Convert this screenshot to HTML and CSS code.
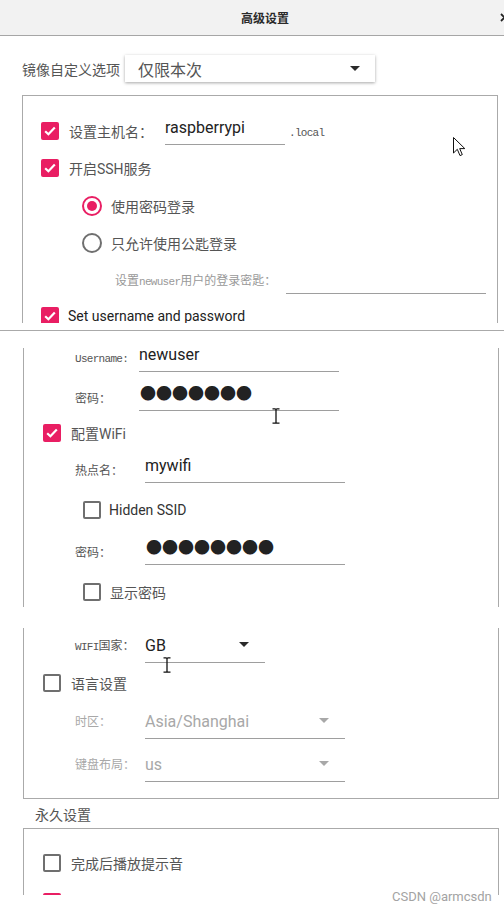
FILE: index.html
```html
<!DOCTYPE html>
<html lang="zh-CN">
<head>
<meta charset="utf-8">
<title>高级设置</title>
<link rel="stylesheet" href="styles.css">
</head>
<body>
<header class="titlebar">
  <span class="title">高级设置</span>
  <span class="close"><svg width="9" height="9" viewBox="0 0 9 9"><path d="M1 1 L8 8 M8 1 L1 8" stroke="#222" stroke-width="1.8"/></svg></span>
</header>

<div class="opt-row">
  <span class="opt-label">镜像自定义选项</span>
  <div class="select-box"><span>仅限本次</span><span class="caret"></span></div>
</div>

<section class="panel p1">
  <div class="row">
    <span class="cb on"><svg width="14" height="14" viewBox="0 0 14 14"><path d="M2.2 7.2 L5.4 10.2 L11.8 3.6" fill="none" stroke="#fff" stroke-width="2.2"/></svg></span>
    <span class="lbl w96">设置主机名：</span>
    <div class="field w120">raspberrypi</div>
    <span class="suffix mono">.local</span>
  </div>
  <div class="row h38">
    <span class="cb on"><svg width="14" height="14" viewBox="0 0 14 14"><path d="M2.2 7.2 L5.4 10.2 L11.8 3.6" fill="none" stroke="#fff" stroke-width="2.2"/></svg></span>
    <span class="lbl">开启SSH服务</span>
  </div>
  <div class="row sub">
    <span class="radio on"></span>
    <span class="rlbl">使用密码登录</span>
  </div>
  <div class="row sub">
    <span class="radio"></span>
    <span class="rlbl">只允许使用公匙登录</span>
  </div>
  <div class="row">
    <span class="keylbl">设置<span class="mono">newuser</span>用户的登录密匙：</span>
    <div class="field w200"></div>
  </div>
  <div class="row h36">
    <span class="cb on"><svg width="14" height="14" viewBox="0 0 14 14"><path d="M2.2 7.2 L5.4 10.2 L11.8 3.6" fill="none" stroke="#fff" stroke-width="2.2"/></svg></span>
    <span class="en">Set username and password</span>
  </div>
  <svg class="pointer" width="13" height="20" viewBox="0 0 13 20"><path d="M0.5 0.5 L0.5 16 L4.3 12.3 L7 18.6 L9.3 17.6 L6.7 11.6 L11.8 11.6 Z" fill="#fff" stroke="#111" stroke-width="1"/></svg>
</section>

<div class="seam"></div>

<section class="panel f2">
  <div class="row h20 ind">
    <span class="flabel w64"><span class="mono">Username:</span></span>
    <div class="field w200">newuser</div>
  </div>
  <div class="row h36 mt11 ind">
    <span class="flabel w64">密码：</span>
    <div class="field w200 dots">●●●●●●●</div>
  </div>
  <div class="row h36">
    <span class="cb on"><svg width="14" height="14" viewBox="0 0 14 14"><path d="M2.2 7.2 L5.4 10.2 L11.8 3.6" fill="none" stroke="#fff" stroke-width="2.2"/></svg></span>
    <span class="lbl">配置WiFi</span>
  </div>
  <div class="row h36 ind">
    <span class="flabel w70">热点名：</span>
    <div class="field w200">mywifi</div>
  </div>
  <div class="row h36 mt5 sub2">
    <span class="cb off"></span>
    <span class="en2">Hidden SSID</span>
  </div>
  <div class="row h36 mt5 ind">
    <span class="flabel w70">密码：</span>
    <div class="field w200 dots">●●●●●●●●</div>
  </div>
  <div class="row h36 mt5 sub2">
    <span class="cb off"></span>
    <span class="rlbl">显示密码</span>
  </div>
  <svg class="ibeam ib1" width="8" height="16" viewBox="0 0 8 16"><path d="M0.5 0.8 H3 Q4 0.8 4 2 V14 Q4 15.2 5 15.2 H7.5 M7.5 0.8 H5 Q4 0.8 4 2 M4 14 Q4 15.2 3 15.2 H0.5" fill="none" stroke="#111" stroke-width="1.3"/></svg>
</section>

<section class="panel f3">
  <div class="row h32 ind">
    <span class="flabel w70"><span class="mono">WIFI</span>国家：</span>
    <div class="field w120 low">GB<span class="caret in"></span></div>
  </div>
  <div class="row h36 mt5">
    <span class="cb off"></span>
    <span class="lbl">语言设置</span>
  </div>
  <div class="row h36 mt1 ind">
    <span class="flabel w70 dim">时区：</span>
    <div class="field w200 low dim">Asia/Shanghai<span class="caret in dim"></span></div>
  </div>
  <div class="row h36 mt7 ind">
    <span class="flabel w70 dim">键盘布局：</span>
    <div class="field w200 low dim">us<span class="caret in dim"></span></div>
  </div>
  <svg class="ibeam ib2" width="8" height="16" viewBox="0 0 8 16"><path d="M0.5 0.8 H3 Q4 0.8 4 2 V14 Q4 15.2 5 15.2 H7.5 M7.5 0.8 H5 Q4 0.8 4 2 M4 14 Q4 15.2 3 15.2 H0.5" fill="none" stroke="#111" stroke-width="1.3"/></svg>
</section>

<div class="section-title">永久设置</div>

<section class="panel p2">
  <div class="row h36">
    <span class="cb off"></span>
    <span class="lbl">完成后播放提示音</span>
  </div>
  <div class="row h36 mt3">
    <span class="cb on"><svg width="14" height="14" viewBox="0 0 14 14"><path d="M2.2 7.2 L5.4 10.2 L11.8 3.6" fill="none" stroke="#fff" stroke-width="2.2"/></svg></span>
  </div>
</section>

<div class="watermark">CSDN @armcsdn</div>
</body>
</html>
```

FILE: styles.css
```css
* { box-sizing: border-box; }
html, body { margin: 0; padding: 0; overflow: hidden; background: #fff; }
body {
  width: 504px;
  height: 911px;
  position: relative;
  font-family: Roboto, "Noto Sans CJK SC", sans-serif;
  font-size: 14px;
  color: #555;
}

/* title bar */
.titlebar {
  width: 504px;
  height: 36px;
  overflow: hidden;
  padding-left: 26px;
  background: #f2f2f2;
  border-bottom: 1px solid #a6a6a6;
  display: grid;
  grid-template-columns: 1fr auto 1fr;
  align-items: center;
}
.title { grid-column: 2; font-size: 12px; font-weight: 700; color: #2a2a2a; }
.close { grid-column: 3; justify-self: end; margin-right: -5px; display: flex; }

/* image options row */
.opt-row {
  display: flex;
  align-items: center;
  height: 27px;
  margin-top: 19px;
  padding-left: 22px;
}
.opt-label { font-size: 14px; color: #555; margin-right: 5px; }
.select-box {
  width: 250px;
  height: 27px;
  display: flex;
  align-items: center;
  justify-content: space-between;
  padding: 0 15px 0 13px;
  box-shadow: 0 1px 3px rgba(0, 0, 0, 0.35);
  font-size: 16px;
  color: #555;
}
.caret {
  width: 0;
  height: 0;
  border-left: 5px solid transparent;
  border-right: 5px solid transparent;
  border-top: 5px solid #2a2a2a;
}
.caret.in { margin-top: 7px; margin-right: 16px; }
.caret.dim { border-top-color: #a8a8a8; }

/* panels */
.panel { position: relative; border: 1px solid #aaa; }
.p1 {
  margin: 13px 6px 0 22px;
  border-bottom: none;
  height: 228px;
  overflow: hidden;
  padding: 16px 0 0 18px;
}
.seam { height: 1px; background: #aaa; margin-top: 7px; }
.f2 {
  margin: 17px 5px 0 23px;
  border-top: none;
  border-bottom: none;
  height: 259px;
  padding-left: 19px;
}
.f3 {
  margin: 21px 5px 0 23px;
  border-top: none;
  padding: 0 0 17px 19px;
}
.section-title {
  height: 29px;
  display: flex;
  align-items: center;
  padding-left: 35px;
  font-size: 14px;
  color: #555;
}
.p2 {
  margin: 0 5px 0 23px;
  border-bottom: none;
  height: 67px;
  overflow: hidden;
  padding: 16px 0 0 19px;
}

/* rows */
.row { display: flex; align-items: center; height: 37px; }
.h20 { height: 20px; }
.h32 { height: 32px; }
.h36 { height: 36px; }
.h38 { height: 38px; }
.mt1 { margin-top: 1px; }
.mt3 { margin-top: 3px; }
.mt5 { margin-top: 5px; }
.mt7 { margin-top: 7px; }
.mt11 { margin-top: 11px; }
.sub { padding-left: 41px; }
.sub2 { padding-left: 40px; }
.ind { padding-left: 32px; }

.lbl { margin-left: 10px; font-size: 14px; color: #555; white-space: nowrap; }
.rlbl { margin-left: 9px; font-size: 14px; color: #555; white-space: nowrap; }
.en { margin-left: 9px; font-size: 14px; color: #222; white-space: nowrap; }
.en2 { margin-left: 8px; font-size: 14px; color: #333; white-space: nowrap; }
.w96 { width: 96px; flex: none; }
.w64 { width: 64px; }
.w70 { width: 70px; }
.w120 { width: 120px; }
.w200 { width: 200px; }

.mono { font-family: "Liberation Mono", monospace; font-size: 11px; letter-spacing: -0.7px; }
.suffix { margin-left: 4px; padding-top: 4px; color: #555; }
.keylbl { margin-left: 74px; width: 171px; flex: none; font-size: 12px; color: #999; white-space: nowrap; }
.flabel { flex: none; font-size: 12px; color: #555; white-space: nowrap; }
.flabel.dim { color: #a8a8a8; }

/* checkbox & radio */
.cb {
  width: 18px;
  height: 18px;
  flex: none;
  border-radius: 2px;
  display: flex;
  align-items: center;
  justify-content: center;
}
.cb.on { background: #e91e63; }
.cb.off { border: 2px solid #6f6f6f; }
.radio {
  width: 20px;
  height: 20px;
  flex: none;
  border-radius: 50%;
  border: 2px solid #6f6f6f;
  display: flex;
  align-items: center;
  justify-content: center;
}
.radio.on { border-color: #e91e63; }
.radio.on::after {
  content: "";
  width: 10px;
  height: 10px;
  border-radius: 50%;
  background: #e91e63;
}

/* text fields */
.field {
  height: 28px;
  flex: none;
  border-bottom: 1px solid #9e9e9e;
  line-height: 22px;
  font-size: 16px;
  color: #222;
  display: flex;
  align-items: flex-start;
  justify-content: space-between;
  white-space: nowrap;
}
.field.low { margin-top: 10px; }
.field.dim { color: #a8a8a8; }
.dots { font-family: "Noto Sans CJK SC", sans-serif; font-size: 16px; line-height: 19px; padding-left: 1px; }

/* cursors over content */
.pointer { position: absolute; left: 430px; top: 41px; }
.ibeam { position: absolute; }
.ib1 { left: 248px; top: 60px; }
.ib2 { left: 139px; top: 29px; }

.watermark {
  position: absolute;
  left: 392px;
  top: 889px;
  font-size: 13px;
  line-height: 16px;
  color: #a3a3a3;
}
```
